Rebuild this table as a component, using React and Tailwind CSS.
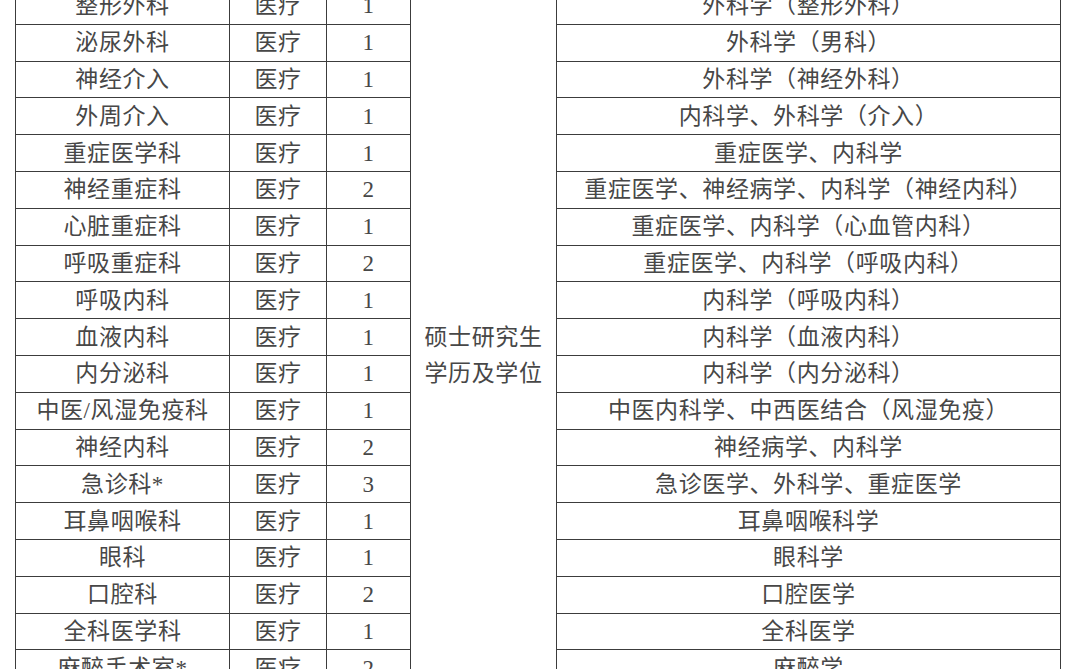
import React from "react";

const rows = [
  ["整形外科", "医疗", "1", "外科学（整形外科）"],
  ["泌尿外科", "医疗", "1", "外科学（男科）"],
  ["神经介入", "医疗", "1", "外科学（神经外科）"],
  ["外周介入", "医疗", "1", "内科学、外科学（介入）"],
  ["重症医学科", "医疗", "1", "重症医学、内科学"],
  ["神经重症科", "医疗", "2", "重症医学、神经病学、内科学（神经内科）"],
  ["心脏重症科", "医疗", "1", "重症医学、内科学（心血管内科）"],
  ["呼吸重症科", "医疗", "2", "重症医学、内科学（呼吸内科）"],
  ["呼吸内科", "医疗", "1", "内科学（呼吸内科）"],
  ["血液内科", "医疗", "1", "内科学（血液内科）"],
  ["内分泌科", "医疗", "1", "内科学（内分泌科）"],
  ["中医/风湿免疫科", "医疗", "1", "中医内科学、中西医结合（风湿免疫）"],
  ["神经内科", "医疗", "2", "神经病学、内科学"],
  ["急诊科*", "医疗", "3", "急诊医学、外科学、重症医学"],
  ["耳鼻咽喉科", "医疗", "1", "耳鼻咽喉科学"],
  ["眼科", "医疗", "1", "眼科学"],
  ["口腔科", "医疗", "2", "口腔医学"],
  ["全科医学科", "医疗", "1", "全科医学"],
  ["麻醉手术室*", "医疗", "2", "麻醉学"],
];

const cell = "border border-[#3c3c3c] p-0 text-center align-middle whitespace-nowrap";

export default function App() {
  return (
    <div className="w-[1080px] h-[669px] overflow-hidden bg-white">
      <table
        className="table-fixed border-collapse ml-[15px] mt-[-13px] w-[1045px] text-[23px] leading-none tracking-[0.6px] text-[#474747]"
        style={{ fontFamily: "'Liberation Serif', 'Noto Sans CJK SC', serif" }}
      >
        <colgroup>
          <col className="w-[214px]" />
          <col className="w-[97px]" />
          <col className="w-[84px]" />
          <col className="w-[146px]" />
          <col className="w-[504px]" />
        </colgroup>
        <tbody>
          {rows.map((r, i) => (
            <tr key={i} className="h-[36.8px]">
              <td className={cell}>{r[0]}</td>
              <td className={cell}>{r[1]}</td>
              <td className={cell}>{r[2]}</td>
              {i === 0 && (
                <td rowSpan={rows.length} className={cell + " pt-[38px] leading-[36px]"}>
                  硕士研究生
                  <br />
                  学历及学位
                </td>
              )}
              <td className={cell}>{r[3]}</td>
            </tr>
          ))}
        </tbody>
      </table>
    </div>
  );
}
